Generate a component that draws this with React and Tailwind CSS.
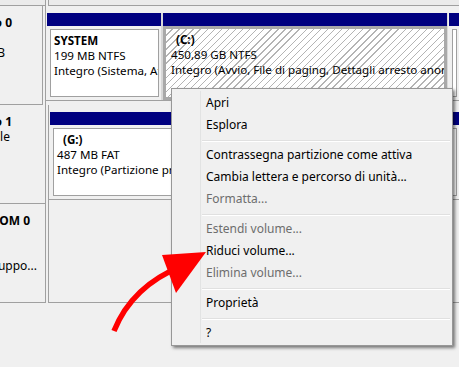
import React from 'react';

// Disk Management (Gestione disco) – context menu over the C: partition

const hatch =
  'bg-[image:repeating-linear-gradient(135deg,#ffffff_0px,#ffffff_4px,#b4b4b4_4px,#b4b4b4_5px)]';

const menuItems = [
  { label: 'Apri' },
  { label: 'Esplora' },
  { sep: true },
  { label: 'Contrassegna partizione come attiva' },
  { label: 'Cambia lettera e percorso di unità...' },
  { label: 'Formatta...', disabled: true },
  { sep: true },
  { label: 'Estendi volume...', disabled: true },
  { label: 'Riduci volume...' },
  { label: 'Elimina volume...', disabled: true },
  { sep: true },
  { label: 'Proprietà' },
  { sep: true },
  { label: '?' },
];

const Partition = ({ className = '', children }) => (
  <div className={`flex flex-col pl-px ${className}`}>
    <div className="h-[13px] bg-[#000080]" />
    <div className="flex-1 pl-[3px] pr-[2px] pt-[3px] pb-[3px]">
      <div className="h-full overflow-hidden whitespace-nowrap border border-[#a0a0a0] bg-white pl-[3px] pt-[3px] text-[11.6px] leading-[15px]">
        {children}
      </div>
    </div>
  </div>
);

const ContextMenu = () => (
  <div className="absolute left-[171px] top-[88px] w-[282px] border border-[#979797] bg-[#f0f0f0] pt-[3px] pb-px shadow-[2px_2px_3px_rgba(0,0,0,0.5)]">
    <div className="absolute left-[28px] top-[2px] bottom-[2px] w-[2px] border-l border-[#e2e3e3] border-r-white" />
    {menuItems.map((item, i) =>
      item.sep ? (
        <div key={i} className="h-[8px] pt-[4px] pl-[30px] pr-[2px]">
          <div className="h-px bg-[#e0e0e0]" />
          <div className="h-px bg-white" />
        </div>
      ) : (
        <div
          key={i}
          className={`flex h-[22px] items-center pl-[34px] ${item.disabled ? 'text-[#6d6d6d]' : 'text-black'}`}
        >
          {item.label}
        </div>
      )
    )}
  </div>
);

const Arrow = () => (
  <svg className="pointer-events-none absolute left-0 top-0" width="459" height="367" viewBox="0 0 459 367">
    <path d="M114 331 Q132 286 182 266" fill="none" stroke="#ff0000" strokeWidth="5.5" />
    <polygon points="162,255 206,252 176,293" fill="#ff0000" />
  </svg>
);

export default function App() {
  return (
    <div className="relative h-[367px] w-[459px] overflow-hidden bg-[#f0f0f0] font-['Noto_Sans',sans-serif] text-[12px] text-black">
      {/* bottom of the previous disk row */}
      <div className="flex h-[6px]">
        <div className="w-[46px] border-r border-b border-[#a0a0a0] bg-[#ebebeb]" />
        <div className="w-[2px]" />
        <div className="flex-1 border-l border-b border-[#a0a0a0] bg-[#ebebeb]" />
      </div>

      {/* Disco 0 */}
      <div className="flex h-[99px]">
        <div className="w-[46px] overflow-hidden border-r border-b border-[#a0a0a0] pt-[9px] leading-[15px] whitespace-nowrap">
          <div className="ml-[-188px] w-[200px] text-right font-bold">Disco 0</div>
          <div className="ml-[-212px] w-[200px] text-right">Di base</div>
          <div className="ml-[-195px] w-[200px] text-right">465,76 GB</div>
          <div className="ml-[-215px] w-[200px] text-right">Online</div>
        </div>
        <div className="w-[2px]" />
        <div className="flex-1 border-l border-[#a0a0a0] pt-[7px]">
          <div className="flex h-[88px] border-b border-[#a0a0a0]">
            <Partition className="w-[115px]">
              <div className="font-bold">SYSTEM</div>
              <div>199 MB NTFS</div>
              <div>Integro (Sistema, Attiva, Partizione primaria)</div>
            </Partition>
            <div className="flex w-[287px] flex-col bg-[#d8d8d8]">
              <div className="ml-[2px] mr-px h-[13px] bg-[#000080]" />
              <div className={`ml-[2px] mr-px flex-1 overflow-hidden whitespace-nowrap border-[3px] border-[#a9a9a9] pl-[5px] pt-[3px] text-[11.6px] leading-[15px] ${hatch}`}>
                <div className="pl-[5px] font-bold">(C:)</div>
                <div>450,89 GB NTFS</div>
                <div>Integro (Avvio, File di paging, Dettagli arresto anomalo, Partizione primaria)</div>
              </div>
            </div>
            <Partition className="flex-1" />
          </div>
        </div>
      </div>

      {/* Disco 1 */}
      <div className="flex h-[99px]">
        <div className="w-[46px] overflow-hidden border-r border-b border-[#a0a0a0] pt-[9px] leading-[15px] whitespace-nowrap">
          <div className="ml-[-188px] w-[200px] text-right font-bold">Disco 1</div>
          <div className="ml-[-190px] w-[200px] text-right">Rimovibile</div>
          <div className="ml-[-215px] w-[200px] text-right">487 MB</div>
          <div className="ml-[-215px] w-[200px] text-right">Online</div>
        </div>
        <div className="w-[2px]" />
        <div className="flex-1 border-l border-[#a0a0a0] pt-[7px]">
          <div className="flex h-[88px] border-b border-[#a0a0a0]">
            <Partition className="flex-1">
              <div className="pl-[6px] font-bold">(G:)</div>
              <div>487 MB FAT</div>
              <div>Integro (Partizione primaria)</div>
            </Partition>
          </div>
        </div>
      </div>

      {/* CD-ROM 0 */}
      <div className="flex h-[99px]">
        <div className="w-[46px] overflow-hidden border-r border-b border-[#a0a0a0] pt-[9px] leading-[15px] whitespace-nowrap">
          <div className="ml-[-170px] w-[200px] text-right font-bold">CD-ROM 0</div>
          <div className="ml-[-210px] w-[200px] text-right">DVD (E:)</div>
          <div className="h-[15px]" />
          <div className="ml-[-163px] w-[200px] text-right">Nessun suppo...</div>
        </div>
        <div className="w-[2px]" />
        <div className="flex-1 border-l border-b border-[#a0a0a0]" />
      </div>

      <ContextMenu />
      <Arrow />
    </div>
  );
}
